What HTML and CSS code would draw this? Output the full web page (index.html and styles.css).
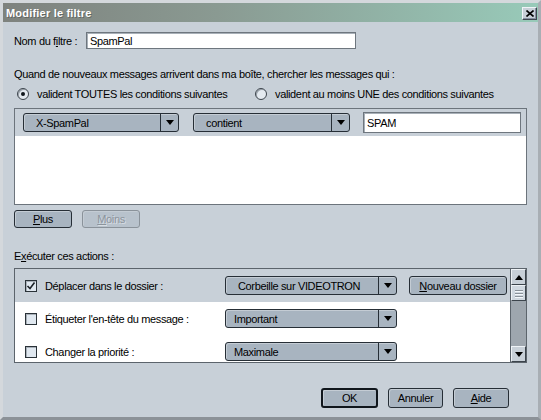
FILE: index.html
```html
<!DOCTYPE html>
<html lang="fr">
<head>
<meta charset="utf-8">
<title>Modifier le filtre</title>
<link rel="stylesheet" href="styles.css">
</head>
<body>
<div class="win">
  <div class="titlebar">
    <span class="title">Modifier le filtre</span>
    <span class="close"><svg width="8" height="7" viewBox="0 0 8 7"><path d="M0.5 0.5L7.5 6.5M7.5 0.5L0.5 6.5" stroke="#000" stroke-width="1.6"/></svg></span>
  </div>
  <div class="content">
    <div class="name-row">
      <span class="name-label">Nom du f<u>i</u>ltre :</span>
      <div class="textbox name-input">SpamPal</div>
    </div>
    <p class="line q">Quand de nouveaux messages arrivent dans ma boîte, chercher les messages qui :</p>
    <div class="radios">
      <div class="opt opt1"><span class="radio on"><span class="dot"></span></span><span>valident TOUTES les conditions suivantes</span></div>
      <div class="opt"><span class="radio"></span><span>valident au moins UNE des conditions suivantes</span></div>
    </div>
    <div class="cond-box">
      <div class="cond-row">
        <div class="combo w156"><span class="combo-text">X-SpamPal</span><span class="combo-arrow"><span class="tri"></span></span></div>
        <div class="combo w157"><span class="combo-text">contient</span><span class="combo-arrow"><span class="tri"></span></span></div>
        <div class="textbox spam">SPAM</div>
      </div>
      <div class="cond-empty"></div>
    </div>
    <div class="btn-row">
      <span class="btn small"><u>P</u>lus</span>
      <span class="btn small disabled"><u>M</u>oins</span>
    </div>
    <p class="line exec">E<u>x</u>écuter ces actions :</p>
    <div class="act-box">
      <div class="act-list">
        <div class="act-row sel">
          <span class="check on"><svg width="10" height="10" viewBox="0 0 10 10"><path d="M1.5 5L4 7.5L8.5 1.5" fill="none" stroke="#1c2228" stroke-width="1.6"/></svg></span>
          <span class="act-label">Déplacer dans le dossier :</span>
          <div class="combo wact"><span class="combo-text">Corbeille sur VIDEOTRON</span><span class="combo-arrow"><span class="tri"></span></span></div>
          <span class="btn newdir"><u>N</u>ouveau dossier</span>
        </div>
        <div class="act-row">
          <span class="check"></span>
          <span class="act-label">Étiqueter l'en-tête du message :</span>
          <div class="combo wact"><span class="combo-text left">Important</span><span class="combo-arrow"><span class="tri"></span></span></div>
        </div>
        <div class="act-row">
          <span class="check"></span>
          <span class="act-label">Changer la priorité :</span>
          <div class="combo wact"><span class="combo-text left">Maximale</span><span class="combo-arrow"><span class="tri"></span></span></div>
        </div>
      </div>
      <div class="scrollbar">
        <span class="sb-btn"><span class="tri up"></span></span>
        <span class="sb-thumb"><span class="grip"></span><span class="grip"></span><span class="grip"></span></span>
        <span class="sb-track"></span>
        <span class="sb-btn"><span class="tri"></span></span>
      </div>
    </div>
    <div class="footer">
      <span class="btn fbtn ok">OK</span>
      <span class="btn fbtn annuler">Annuler</span>
      <span class="btn fbtn aide"><u>A</u>ide</span>
    </div>
  </div>
</div>
</body>
</html>
```
FILE: styles.css
```css
* { box-sizing: border-box; }
html, body { margin: 0; padding: 0; }
body {
  width: 541px;
  height: 420px;
  overflow: hidden;
  font-family: "Liberation Sans", Arial, sans-serif;
  font-size: 11px;
  letter-spacing: -0.35px;
  color: #000;
  background: #c8d0d8;
}
u { text-decoration: underline; text-underline-offset: 1px; }
.win {
  width: 541px;
  height: 420px;
  border: 3px solid #c0c6cc;
  border-left-color: #d4d8dc;
  border-top-color: #d4d8dc;
  border-right-color: #a8aeb4;
  border-bottom-color: #8c9298;
  background: #c8d0d8;
  display: flex;
  flex-direction: column;
}
.titlebar {
  height: 19px;
  flex: none;
  display: flex;
  align-items: center;
  justify-content: space-between;
  padding: 0 1px 0 3px;
  background: linear-gradient(to right, #7e827e 0%, #8a9a92 40%, #98cab9 100%);
}
.title {
  color: #fff;
  font-weight: bold;
  font-size: 11px;
  letter-spacing: 0.2px;
  text-shadow: 1px 1px 0 rgba(0,0,0,0.25);
}
.close {
  width: 15px;
  height: 13px;
  display: flex;
  align-items: center;
  justify-content: center;
  background: #c8d0d8;
  border: 1px solid;
  border-color: #f0f4f8 #404850 #404850 #f0f4f8;
  box-shadow: inset -1px -1px 0 #8890a0;
  margin-top: 2px;
}
.content {
  flex: 1;
  padding: 10px 11px 0 11px;
  display: flex;
  flex-direction: column;
}
.name-row {
  display: flex;
  align-items: center;
  height: 17px;
}
.name-label { width: 72px; }
.textbox {
  background: #fff;
  border: 1px solid #6e767e;
  box-shadow: inset 1px 1px 0 #a8b0b8;
  display: flex;
  align-items: center;
  padding-left: 3px;
}
.name-input { width: 270px; height: 17px; }
.line { margin: 0; line-height: 13px; }
.q { margin-top: 19px; }
.radios {
  margin-top: 6px;
  height: 13px;
  display: flex;
  align-items: center;
}
.opt { display: flex; align-items: center; gap: 8px; }
.opt1 { width: 238px; margin-left: 3px; }
.radio {
  width: 12px;
  height: 12px;
  border-radius: 50%;
  border: 1px solid #3c444c;
  background: #e4eaf0;
  box-shadow: inset 1px 1px 0 #9aa2aa;
  display: flex;
  align-items: center;
  justify-content: center;
}
.radio .dot {
  width: 4px;
  height: 4px;
  border-radius: 50%;
  background: #10161c;
}
.cond-box {
  margin-top: 8px;
  border: 1px solid #6c747c;
  background: #fff;
  display: flex;
  flex-direction: column;
}
.cond-row {
  background: #c8d0d8;
  padding: 4px 5px 4px 8px;
  height: 27px;
  display: flex;
  align-items: center;
}
.cond-empty { height: 68px; }
.combo {
  height: 19px;
  display: flex;
  border: 1px solid #262e36;
  border-radius: 3px;
  background: #a8b4c0;
  box-shadow: inset 1px 1px 0 #c4ccd4;
}
.w156 { width: 156px; }
.w157 { width: 157px; margin-left: 14px; }
.combo-text {
  flex: 1;
  padding-left: 12px;
  display: flex;
  align-items: center;
  white-space: nowrap;
  overflow: hidden;
}
.combo-text.left { padding-left: 8px; }
.combo-arrow {
  width: 18px;
  border-left: 1px solid #262e36;
  display: flex;
  align-items: center;
  justify-content: center;
}
.tri {
  width: 0;
  height: 0;
  border-left: 4.5px solid transparent;
  border-right: 4.5px solid transparent;
  border-top: 5px solid #000;
}
.tri.up {
  border-top: 0;
  border-bottom: 5px solid #000;
}
.spam { width: 158px; height: 21px; margin-left: 13px; }
.btn-row {
  margin-top: 5px;
  display: flex;
  gap: 10px;
}
.btn {
  display: flex;
  align-items: center;
  justify-content: center;
  background: #a8b4c0;
  border: 1px solid #262e36;
  border-radius: 3px;
  box-shadow: inset 1px 1px 0 #c4ccd4;
  white-space: nowrap;
}
.btn.small { width: 58px; height: 18px; }
.btn.disabled {
  background: #b8c2cc;
  border-color: #8a929a;
  color: #8c949c;
  text-shadow: 1px 1px 0 #d8dee4;
}
.exec { margin-top: 22px; }
.act-box {
  margin-top: 5px;
  height: 95px;
  border: 1px solid #5c646c;
  background: #fff;
  display: flex;
  overflow: hidden;
}
.act-list { flex: 1; overflow: hidden; }
.act-row {
  height: 33px;
  flex: none;
  display: flex;
  align-items: center;
  padding-left: 10px;
}
.act-row.sel { background: #c8d0d8; }
.check {
  width: 12px;
  height: 12px;
  border: 1px solid #2a3238;
  background: #e0e8f0;
  box-shadow: inset 1px 1px 0 #a8b0b8;
  display: flex;
  align-items: center;
  justify-content: center;
  flex: none;
}
.act-label { width: 180px; margin-left: 8px; white-space: nowrap; }
.wact { width: 172px; }
.newdir { width: 98px; height: 19px; margin-left: 12px; }
.scrollbar {
  width: 16px;
  flex: none;
  display: flex;
  flex-direction: column;
  background: #9ea6ae;
  border-left: 1px solid #5c646c;
}
.sb-btn, .sb-thumb {
  height: 16px;
  flex: none;
  background: #c8d0d8;
  border: 1px solid;
  border-color: #eef2f6 #3c444c #3c444c #eef2f6;
  display: flex;
  align-items: center;
  justify-content: center;
}
.sb-thumb {
  flex-direction: column;
  gap: 2px;
  background: #d0d8e0;
}
.grip {
  width: 8px;
  height: 1px;
  background: #8a929a;
  box-shadow: 0 1px 0 #f4f8fc;
}
.sb-track { flex: 1; }
.footer {
  margin-top: 25px;
  display: flex;
  justify-content: flex-end;
  gap: 10px;
  padding-right: 18px;
}
.fbtn { height: 20px; }
.ok { width: 57px; border: 2px solid #10161c; }
.annuler { width: 55px; }
.aide { width: 56px; }
```
